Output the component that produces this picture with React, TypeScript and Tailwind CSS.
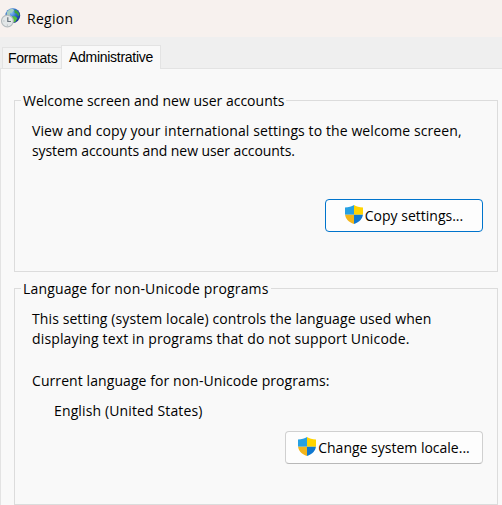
import type { ReactNode } from "react";
import clsx from "clsx";

function RegionIcon() {
  return (
    <svg width="20" height="20" viewBox="0 0 20 20" className="-mt-[1px] shrink-0">
      <defs>
        <radialGradient id="ocean" cx="0.4" cy="0.3" r="0.75">
          <stop offset="0" stopColor="#8fc4f2" />
          <stop offset="0.45" stopColor="#2f6fd0" />
          <stop offset="1" stopColor="#152a86" />
        </radialGradient>
      </defs>
      <circle cx="11.8" cy="7.6" r="7.4" fill="url(#ocean)" />
      <path d="M5.6 4.2 Q8 0.8 12 0.8 L13 2.4 L11 4.4 L9.2 5 L8.8 7.6 L6 8 Z" fill="#a6cfc4" />
      <path d="M13.4 1.4 Q17.8 3 18.6 7 L17 8.2 L16 5.8 L13.6 5 Z" fill="#3fa33a" />
      <path d="M11.4 8 L14.4 8.4 L16.4 10.2 L14.4 13.8 L12.4 14.4 L11.8 11.6 Z" fill="#55c03c" />
      <circle cx="6.4" cy="13" r="5.9" fill="#e3e7e8" stroke="#b4bbbe" strokeWidth="1.1" />
      <path d="M6.8 9.2 V13.5 H10" fill="none" stroke="#6b757d" strokeWidth="1.2" />
      <path d="M2.4 13 H3.4 M6.4 16.6 V17.6" stroke="#9aa4aa" strokeWidth="0.8" />
    </svg>
  );
}

function ShieldIcon() {
  return (
    <svg width="18" height="19" viewBox="0 0 18 18" preserveAspectRatio="none" className="mb-[2px] shrink-0">
      <defs>
        <clipPath id="shield">
          <path d="M9 0 C6.8 1.5 3.6 2.3 0 2.3 V8 C0 12.8 3.6 16.2 9 18 C14.4 16.2 18 12.8 18 8 V2.3 C14.4 2.3 11.2 1.5 9 0 Z" />
        </clipPath>
      </defs>
      <g clipPath="url(#shield)">
        <path d="M0 0 H9 V9.3 H0 Z" fill="#27a0e2" />
        <path d="M9 0 H18 V9.3 H9 Z" fill="#ffd400" />
        <path d="M0 9.3 H9 V18 H0 Z" fill="#f3b51b" />
        <path d="M9 9.3 H18 V18 H9 Z" fill="#0f78d0" />
      </g>
    </svg>
  );
}

function ShieldButton({
  children,
  focused,
  className,
}: {
  children: ReactNode;
  focused?: boolean;
  className?: string;
}) {
  return (
    <button
      className={clsx(
        "flex h-[33px] items-center justify-center gap-[2px] rounded-[4px] border bg-[#fdfdfd] whitespace-nowrap",
        focused ? "border-[#0074cc]" : "border-[#d0d0d0] border-b-[#b8b8b8]",
        className
      )}
    >
      <ShieldIcon />
      {children}
    </button>
  );
}

function Group({
  title,
  children,
  className,
}: {
  title: ReactNode;
  children: ReactNode;
  className?: string;
}) {
  return (
    <fieldset className={clsx("ml-[13px] w-[484px] border border-[#dcdcdc] pl-[17px]", className)}>
      <legend className="-ml-[11px] h-[19px] px-[2px]">{title}</legend>
      {children}
    </fieldset>
  );
}

export default function App() {
  return (
    <div className="flex h-[505px] w-[502px] flex-col overflow-hidden bg-[#efefef] font-['Open_Sans','Noto_Sans',sans-serif] text-[14px] leading-5 whitespace-nowrap text-black">
      <header className="flex h-[37px] shrink-0 items-center gap-[6px] bg-[#f7f1ee] pl-[1px]">
        <RegionIcon />
        <span className="tracking-[0.3px]">Region</span>
      </header>

      {/* Tabs */}
      <div className="flex h-[31px] shrink-0 items-end pl-[2px] font-['Liberation_Sans',Arial,sans-serif] tracking-[-0.28px]">
        <div className="h-[21px] w-[59px] border border-r-0 border-b-0 border-[#e3e3e3] bg-[#f3f3f3] pl-[5px] leading-5">
          Formats
        </div>
        <div className="relative z-10 -mb-px h-6 w-[100px] border border-b-0 border-[#e3e3e3] bg-[#f9f9f9] pl-[7px] leading-[22px]">
          Administrative
        </div>
      </div>

      <main className="flex-1 border-t border-l border-[#e3e3e3] bg-[#f9f9f9] pt-[22px]">
        <Group title="Welcome screen and new user accounts" className="h-[181px]">
          <p className="mt-[11px]">
            <span className="tracking-[0.095px]">
              View and copy your international settings to the welcome screen,
            </span>
            <br />
            <span className="tracking-[-0.08px]">system accounts and new user accounts.</span>
          </p>
          <ShieldButton focused className="mt-[38px] ml-[293px] w-[158px]">
            <span>Copy settings...</span>
          </ShieldButton>
        </Group>

        <Group
          title={<span className="tracking-[0.16px]">Language for non-Unicode programs</span>}
          className="mt-[7px] h-[226px]"
        >
          <p className="mt-[11px]">
            <span className="tracking-[0.1px]">
              This setting (system locale) controls the language used when
            </span>
            <br />
            <span className="tracking-[0.14px]">
              displaying text in programs that do not support Unicode.
            </span>
          </p>
          <p className="mt-[22px] tracking-[0.08px]">Current language for non-Unicode programs:</p>
          <p className="mt-[10px] pl-[22px] tracking-[0.13px]">English (United States)</p>
          <ShieldButton className="mt-[10px] ml-[253px] w-[198px]">
            <span>Change system locale...</span>
          </ShieldButton>
        </Group>
      </main>
    </div>
  );
}
